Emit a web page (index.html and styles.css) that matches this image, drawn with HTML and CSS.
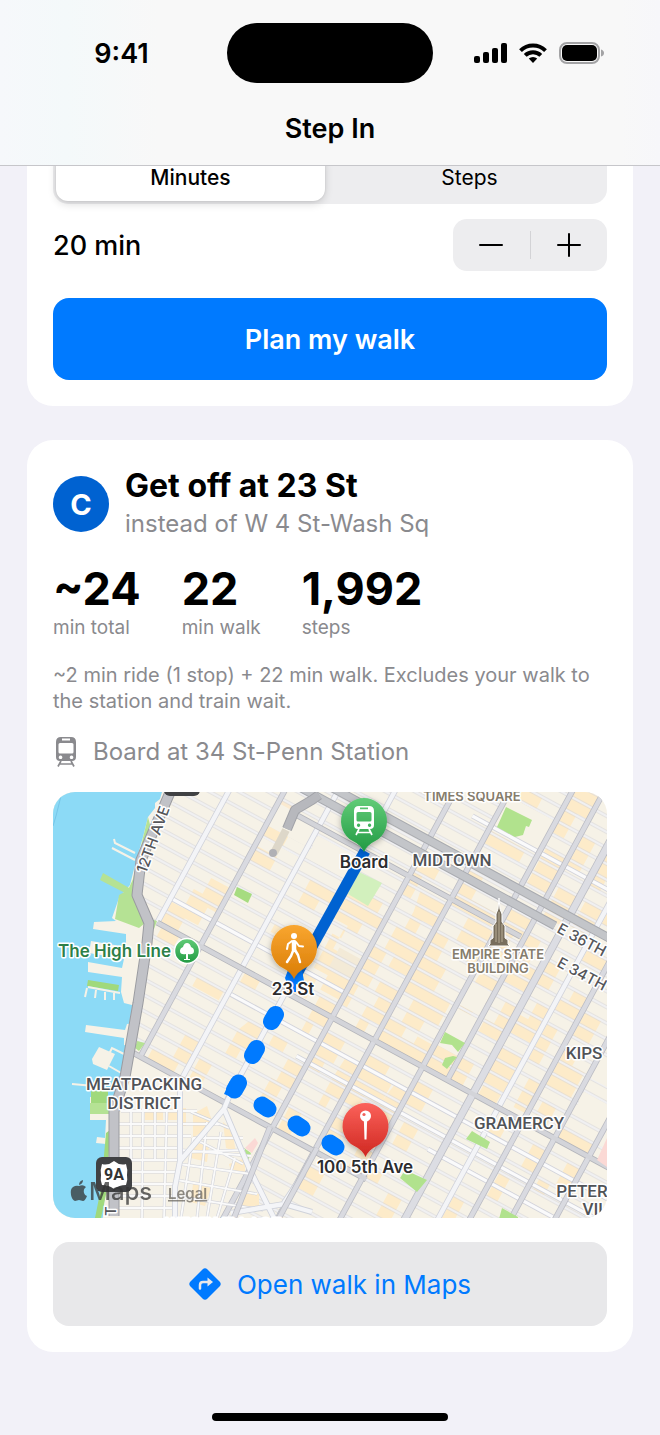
FILE: index.html
```html
<!DOCTYPE html>
<html lang="en">
<head>
  <meta charset="UTF-8">
  <meta name="viewport" content="width=device-width, initial-scale=1.0">
  <title>Step In</title>
  <link rel="stylesheet" href="styles.css">
</head>
<body>
  <header class="top-bar">
    <div class="status-bar">
      <span class="time">9:41</span>
      <span class="island"></span>
      <span class="status-icons">
        <svg width="33" height="20" viewBox="0 0 33 20">
          <rect x="0" y="13" width="6" height="7" rx="2"/>
          <rect x="9" y="9" width="6" height="11" rx="2"/>
          <rect x="18" y="5" width="6" height="15" rx="2"/>
          <rect x="27" y="0" width="6" height="20" rx="2"/>
        </svg>
        <svg width="28" height="20" viewBox="0 0 28 20" fill="none" stroke="#000" stroke-width="4">
          <path d="M1.5 7.6a18 18 0 0 1 25 0"/>
          <path d="M6.2 12.4a11.2 11.2 0 0 1 15.6 0"/>
          <path d="M14 20l-4.2-4.4a6.2 6.2 0 0 1 8.4 0z" fill="#000" stroke="none"/>
        </svg>
        <svg width="45" height="22" viewBox="0 0 45 22">
          <rect x="1" y="1" width="39" height="20" rx="7" fill="none" stroke="#a3a3a5" stroke-width="2"/>
          <rect x="3" y="3" width="35" height="16" rx="5"/>
          <path d="M42 7.5q3 1 3 3.5t-3 3.5z" fill="#a3a3a5"/>
        </svg>
      </span>
    </div>
    <h1>Step In</h1>
  </header>

  <main>
    <section class="card planner">
      <form id="planForm">
        <div class="segmented">
          <input type="radio" name="unit" id="unitMinutes" checked>
          <label for="unitMinutes">Minutes</label>
          <input type="radio" name="unit" id="unitSteps">
          <label for="unitSteps">Steps</label>
        </div>
        <div class="amount-row">
          <output id="amount">20 min</output>
          <div class="stepper">
            <button type="button" aria-label="Decrease">
              <svg width="24" height="24" viewBox="0 0 24 24"><path d="M1 12h22"/></svg>
            </button>
            <button type="button" aria-label="Increase">
              <svg width="24" height="24" viewBox="0 0 24 24"><path d="M1 12h22M12 1v22"/></svg>
            </button>
          </div>
        </div>
        <button type="submit" class="plan-btn">Plan my walk</button>
      </form>
    </section>

    <section class="card result">
      <div class="stop">
        <span class="line-badge">C</span>
        <div>
          <h2>Get off at 23 St</h2>
          <p class="instead">instead of W 4 St-Wash Sq</p>
        </div>
      </div>

      <dl class="stats">
        <div><dd>~24</dd><dt>min total</dt></div>
        <div><dd>22</dd><dt>min walk</dt></div>
        <div><dd>1,992</dd><dt>steps</dt></div>
      </dl>

      <p class="note">~2 min ride (1 stop) + 22 min walk. Excludes your walk to the station and train wait.</p>

      <p class="board">
        <svg width="26" height="32" viewBox="0 0 26 32">
          <path fill-rule="evenodd" d="M8 1h10q5 0 5 5v15q0 4-4 4H7q-4 0-4-4V6q0-5 5-5zM9 2.5v2h8v-2zM7 7q-1.500 0-1.500 1.500V16q0 1.500 1.500 1.500h12q1.500 0 1.500-1.500V8.500Q20.500 7 19 7zM7.500 19.500a1.800 1.800 0 1 0 .1 0zM18.500 19.500a1.800 1.800 0 1 0 .1 0z"/>
          <path d="M8 25l-3 5.500M18 25l3 5.500M6.500 28h13" fill="none" stroke="#8a8a8e" stroke-width="1.700"/>
        </svg>
        Board at 34 St-Penn Station
      </p>

      <svg class="map" viewBox="0 0 554 426" role="img" aria-label="Walk from 23 St to 100 5th Ave">
        <defs>
          <pattern id="streets" y="2" width="40" height="14" patternUnits="userSpaceOnUse">
            <path d="M0 7h40" stroke="#d3d4da" stroke-width="2.800"/>
            <path d="M0 7h40" stroke="#fafafa" stroke-width="1.600"/>
          </pattern>
          <linearGradient id="green" x2="0" y2="1"><stop offset="0" stop-color="#62cc78"/><stop offset="1" stop-color="#219a43"/></linearGradient>
          <linearGradient id="orange" x2="0" y2="1"><stop offset="0" stop-color="#f9a62f"/><stop offset="1" stop-color="#d97c06"/></linearGradient>
          <linearGradient id="red" x2="0" y2="1"><stop offset="0" stop-color="#fb625a"/><stop offset="1" stop-color="#cf2721"/></linearGradient>
          <filter id="shadow" x="-30%" y="-30%" width="160%" height="160%"><feDropShadow dx="0" dy="2" stdDeviation="3" flood-opacity=".3"/></filter>
          <path id="pin" d="M0-23a23 23 0 0 1 12 42.600Q3 24 0 31Q-3 24-12 19.600A23 23 0 0 1 0-23z"/>
          <path id="train" fill-rule="evenodd" d="M-5-15h10q5 0 5 5V4q0 4-4 4H-6q-4 0-4-4v-14q0-5 5-5zM-4-13.500v1.700h8v-1.700zM-6-9q-1.500 0-1.500 1.500V-1q0 1.500 1.500 1.500H6Q7.500.500 7.500-1v-6.500Q7.500-9 6-9zM-5.500 2.500a1.700 1.700 0 1 0 .1 0zM5.500 2.500a1.700 1.700 0 1 0 .1 0z"/>
        </defs>

        <rect width="554" height="426" fill="#f6f2e7"/>

        <!-- everything in this group is drawn along the street grid -->
        <g transform="rotate(28.500)">
          <!-- busy blocks -->
          <path fill="#fdebc9" d="M205-75h23v42h-23zM180 0h23v28h-12v20h-15v14h-20V40h14V18h10zM160 65h20v14h-20zM120 205h40v14h-40zM122 177h48v13h-48z
            M215 93h30v11h-30zM255 65h17v14h-17zM232 149h16v28h-16zM210 177h30v12h-30z
            M268-47h30v14h-12v14h-18zM258 9h14v10h-14zM282 107h15v28h-9v12h-12v-26zM256 163h14v27h-14z
            M303-61h40v13h10v16h-18v12h-14v24h18v16h12v26h-22v-16h-16V-9h10v-14h-20z
            M303 37h18v24h-18zM332 51h20v28h-12v14h-8zM310 107h16v12h-16zM334 121h18v28h-10v28h-14v-30h6z
            M355-117h22v14h-12v26h-10zM370-89h30v26h-14v16h14v40h-22v-14h-12v-26h8v-20zM355-19h15v42h-9v26h-6z
            M378 9h22v40h-12v14h-10V37h6V23h-6zM356 79h20v26h-8v16h-12zM384 93h16v42h-10v14h-8v-28zM358 163h14v27h-14z
            M403-229h30v26h-10v10h-20zM403-175h40v14h-40zM436-201h18v24h-12v-10h-6zM403-131h16v26h30v14h-46zM425-89h30v40h-16v-12h-14z
            M403-61h15v28h12v28h20v28h-14v14h-20V9h-13zM403 37h20v12h14v-8h18v22h-52zM403 79h24v12h10v28h-18v14h-16zM440 93h15v40h-9v14h-10v-28z
            M403 149h15v28h-15zM438 163h16v28h-16zM403 205h18v26h-18z
            M458-257h25v26h-12v28h-13zM460-187h22v42h-22zM458-117h25v24h-10v30h-15zM462-47h20v28h-8v30h-14v-16zM458 23h24v40h-24zM458 79h18v28h-18zM466 121h16v28h-16zM458 177h14v14h-14z
            M487-215h14v38h-14zM490-159h21v34h-21zM486-103h14v28h10v26h-24zM498-33h12v40h-22V-7h10zM486 37h14v26h-14z
            M516-215h25v14h-13v28h-12zM520-159h20v30h-20zM516-89h14v28h-14zM526-47h14v40h-24v-20h10zM516 9h24v40h-24zM518 51h20v13h-20z
            M545-187h12v42h-12zM545-117h24v14h-24zM553-75h15v28h-23v-14h8zM545-33h12v42h-12zM555 23h13v34h-13zM544 79h14v14h-14z
            M573-145h20v28h-20zM573-61h18v28h-18zM573-19h14v12h14v30h-28zM578 37h15v24h-15zM590 79h14v28h-14zM574 121h12v28h-12z
            M610-75h18v14h-18zM608 51h36v12h-36zM629 79h14v26h-14zM612 107h12v14h-12zM545 163h12v28h-12zM486 191h15v28h-15z"/>
          <path fill="#fbead0" d="M205-103h20v28h-20z"/>
          <path fill="#f3ead7" d="M326 0h24v24h-24z"/>

          <path d="M110-300H760V420H350V191H110z" fill="url(#streets)"/>
          <!-- super blocks -->
          <g fill="#f6f2e7">
            <path d="M205-98h44v25h-44zM254-88h45v25h-45zM205-60h44v10h-44zM609-30h34v25h-34zM648 10h80v40h-80zM610 10h33v24h-33z"/>
            <path d="M459-33h22v26h-22zM543-145h26v25h-26zM457-3h25v42h-25zM404-214h51v36h-51z"/>
          </g>

          <!-- cross streets -->
          <g fill="none">
            <path d="M253 93H690M340 116H690M154 37H354M500 135H690M380-179H560M203-173H300" stroke="#d3d4db" stroke-width="5"/>
            <path d="M253 93H690M340 116H690M154 37H354M500 135H690M380-179H560M203-173H300" stroke="#fafafb" stroke-width="3.200"/>
          </g>

          <!-- light avenues -->
          <g fill="none">
            <path d="M154-200V65M250-200V191M300-250V191M542-300V78M542 93V230" stroke="#d0d2da" stroke-width="6"/>
            <path d="M154-200V65M250-200V191M300-250V191M542-300V78M542 93V230" stroke="#f3f4f7" stroke-width="4.400"/>
          </g>

          <!-- grey avenues and main crosstown streets -->
          <g fill="none">
            <path d="M203-200V191M353-250V330M401-250V400M456-300V300M484-300V65M570-300V300M606-300V300M645-300V300" stroke="#bcbdc4" stroke-width="6"/>
            <path d="M513-300V300" stroke="#bcbdc4" stroke-width="8"/>
            <path d="M154 65H760M122 191H460M220-96H480" stroke="#b4b5bb" stroke-width="6"/>
            <path d="M203-200V191M353-250V330M401-250V400M456-300V300M484-300V65M570-300V300M606-300V300M645-300V300" stroke="#d9dae0" stroke-width="4.400"/>
            <path d="M513-300V300" stroke="#dcdde3" stroke-width="6.400"/>
            <path d="M154 65H760M122 191H460M220-96H480" stroke="#d3d4d9" stroke-width="4.400"/>
            <path d="M230-137H760M200-122H505" stroke="#a9abb0" stroke-width="9"/>
            <path d="M230-137H760M200-122H505" stroke="#c3c5c9" stroke-width="7"/>
          </g>
        </g>

        <!-- parks and squares -->
        <path fill="#b1e28d" d="M453 15l26 13-3 7-3-1-3 9-8 2-18-10zM392 240l20 11-7 9-6-7-12-2zM400 264l4 1-10 12-5-4 3-7zM419 339l18 11-3 7-21-10zM352 378l22 10-10 12-17-14zM449 416l16 9v2h-19zM191 356l7 5-4 10-4-10z"/>
        <path fill="#a6dc80" d="M184 95l15 7-4 9-14-8z"/>
        <path fill="#d2f0bd" d="M306 80l23 11-14 23-20-12z"/>
        <path fill="#fbd9d5" d="M554 346l-10 22 10 7zM202 346l3 5-6 10-7-5z"/>

        <!-- village streets -->
        <g fill="none">
          <path fill="#fdebc9" d="M92 318h18v10h-18zM113 316h20v18h-9v-6h-11zM140 322l14-8 6 18-20 14zM170 330l9 8 4 22-10-4zM140 350l16 4-2 16-16-4zM140 392l18 4-6 18-14-4zM188 402h18v12h-18zM176 372l16-6v14h-14z"/>
          <g stroke="#d3d4da" stroke-width="3">
            <path d="M68 319h76M66 332h100M66 344h72M66 356h64M66 368h60M66 380h59M66 392h57M66 404h56M66 416h56M90 316l-1 110M114 312l-3 114M78 318v50M102 318v50"/>
            <path d="M128 358l70 6M126 372l72 10M124 388l80 14M122 404l88 14M140 346l-12 80M154 330l-10 96M168 340l-14 86M182 366l-18 60M200 380l-20 46M176 336l-38-16M190 372l-50-26M140 346h50M136 360l56-2"/>
          </g>
          <g stroke="#fafafa" stroke-width="1.800">
            <path d="M68 319h76M66 332h100M66 344h72M66 356h64M66 368h60M66 380h59M66 392h57M66 404h56M66 416h56M90 316l-1 110M114 312l-3 114M78 318v50M102 318v50"/>
            <path d="M128 358l70 6M126 372l72 10M124 388l80 14M122 404l88 14M140 346l-12 80M154 330l-10 96M168 340l-14 86M182 366l-18 60M200 380l-20 46M176 336l-38-16M190 372l-50-26M140 346h50M136 360l56-2"/>
          </g>
          <path d="M181 293l-10 24-44 52-5 26v31M171 317l26 61 24 48M127 290v79M178 421l53-9 28 8M231 411l20-30" stroke="#cfd2da" stroke-width="6"/>
          <path d="M181 293l-10 24-44 52-5 26v31M171 317l26 61 24 48M127 290v79M178 421l53-9 28 8M231 411l20-30" stroke="#f4f5f8" stroke-width="4.400"/>
          <path d="M181 426l36-91M226 426l38-70" stroke="#bcbdc4" stroke-width="6"/>
          <path d="M181 426l36-91M226 426l38-70" stroke="#d9dae0" stroke-width="4.400"/>
        </g>

        <!-- west side, river and piers -->
        <path fill="#f6f2e7" d="M0 0h118L88 68l-4 35 12 28-2 20-10 60-14 76-10 34v105H0z"/>
        <path fill="#8cdaf6" d="M0 0h109l-2 7-5 4v5l-7 9-5 20-8 28-5 20-11 13-7 20 4 3-22 1-1 7 33 5v13l-35-6-2 12 35 6-2 9-34-6v10l34 5-1 15 3 11 12 3-1 17-8 1-2 6-39-5-1 7 39 6v7l8 2-5 31-5 8-9 11H37v23h16l-1 18-8-1-1 6 10 1-2 64-2 15H30v6H0z"/>
        <path fill="#b5e294" d="M95 25l4 15-12 30-4 33 9 28-6 5-24-9 4-24 9-5 5-11zM50 81l28 16-4 5-27-14zM95 126l9 3-3 8-6-3zM84 249l8 2-6 8-4-3z"/>
        <path fill="#a0d97c" d="M38 299h17v12H38zM35 188l31 5-1 6-31-5zM53 341l4-3-3 60-6 28h-6l6-30z"/>
        <path fill="#b5e294" d="M37 311h19v11H37z"/>
        <path fill="#f6f2e7" d="M46 255l16 7-8 16-14-6-1-5z"/>
        <path fill="none" stroke="#f6f2e7" stroke-width="2" d="M56 262l3-6 12 6M56 274l14 8M19 292l22 2M34 196l-2 9M43 198l-1 8M52 200v8M61 201v7M35 195l32 6M61 47l1 4 20 10M59 56l23 12"/>
        <path fill="none" stroke="#9b9ca1" stroke-width="11" stroke-linejoin="round" d="M118-2L88 68l-4 35 12 28-2 20-9 60-13 74-11 34v105"/>
        <path fill="none" stroke="#c1c2c7" stroke-width="9" stroke-linejoin="round" d="M118-2L88 68l-4 35 12 28-2 20-9 60-13 74-11 34v105"/>
        <path fill="none" stroke="#76c5e8" d="M9 0L3 24 0 34"/>

        <!-- tunnel entrance -->
        <path fill="none" stroke="#ddd7c9" stroke-width="8" d="M233 38l-12 23"/>
        <path fill="none" stroke="#a2a3a8" stroke-width="10" stroke-linejoin="round" d="M266 3l-7 5-17 10-8 19"/>
        <path fill="none" stroke="#b7b8bd" stroke-width="8" stroke-linejoin="round" d="M266 3l-7 5-17 10-8 19"/>
        <circle cx="220" cy="61" r="4" fill="#b0b0b5"/>

        <!-- area labels -->
        <g class="halo" text-anchor="middle">
          <text class="area" x="399" y="74">MIDTOWN</text>
          <text class="area" x="91" y="298">MEATPACKING</text>
          <text class="area" x="91" y="317">DISTRICT</text>
          <text class="area" x="466" y="337">GRAMERCY</text>
          <text class="area" x="531" y="267">KIPS</text>
          <text class="area" x="529" y="405">PETER</text>
          <text class="area" x="542" y="423">VIL</text>
          <text class="area" x="170" y="438">WEST VILLAGE</text>
          <text class="sight" x="419" y="9">TIMES SQUARE</text>
          <text class="sight" x="445" y="167">EMPIRE STATE</text>
          <text class="sight" x="445" y="181">BUILDING</text>
        </g>
        <g class="halo road">
          <text transform="translate(93 82) rotate(-70)">12TH AVE</text>
          <text transform="translate(503 140) rotate(28)">E 36TH</text>
          <text transform="translate(503 174) rotate(28)">E 34TH</text>
          <text transform="translate(63 424) rotate(-90)">T</text>
        </g>
        <text class="halo park" x="5" y="165">The High Line</text>
        <circle cx="134" cy="159" r="12.500" fill="url(#green)" stroke="#fff" stroke-width="1.500"/>
        <path fill="#fff" d="M133 167v-5q-6 1-6-3 0-3 3-4 1-4 4-4t4 4q3 1 3 4 0 4-6 3v5h2v1h-6v-1z"/>

        <!-- empire state building -->
        <path fill="#786e5d" stroke="#fff" stroke-width="1" d="M446 106l1 11 2 5v8l3 4v12l3 2v4l2 2h-22l2-2v-4l3-2v-12l3-4v-8l2-5z"/>
        <path stroke="#b9ae98" stroke-width="1" d="M446 120v31M449 132v18M443 132v18"/>

        <!-- route -->
        <path d="M312 59L241 187" stroke="#0062d1" stroke-width="11"/>
        <g stroke="#007aff" stroke-width="17" stroke-linecap="round">
          <path d="M222.500 222.500l-4 7M203.500 256.500l-4 7M185.500 291l-4 7M209 313l6 4M243 332l6 4M277 351l6 4"/>
        </g>
        <path fill="#007aff" d="M177 289l-6 13 10 4zM232 186l3-8h14l2 11-3 5-5-2v8h-4v-8l-4 2z"/>

        <!-- pins -->
        <g transform="translate(311 29)">
          <use href="#pin" fill="url(#green)" filter="url(#shadow)"/>
          <use href="#train" fill="#fff"/>
          <path d="M-5 8l-3 6M5 8l3 6M-7 11.500H7" fill="none" stroke="#fff" stroke-width="1.700"/>
        </g>
        <g transform="translate(241 156)">
          <use href="#pin" fill="url(#orange)" filter="url(#shadow)"/>
          <circle cy="-12" r="3" fill="#fff"/>
          <g fill="none" stroke="#fff" stroke-linecap="round" stroke-linejoin="round">
            <path d="M0-6v8" stroke-width="4.500"/>
            <path d="M-1 3l-2 5-4 6M1 2l3 5 2 7" stroke-width="2.500"/>
            <path d="M-2-7l-4 3-1 5M2-6l3 4 4 .5" stroke-width="2"/>
          </g>
        </g>
        <g transform="translate(312.500 334)">
          <use href="#pin" fill="url(#red)" filter="url(#shadow)"/>
          <circle cy="-10" r="5.500" fill="#fff"/>
          <circle cx="-1.500" cy="-11.500" r="1.600" fill="#f0625c"/>
          <path d="M-1.600-5h3.200L1 13.500h-2z" fill="#fff"/>
        </g>
        <g class="halo place" text-anchor="middle">
          <text x="311" y="76">Board</text>
          <text x="240" y="203">23 St</text>
          <text x="312" y="381">100 5th Ave</text>
        </g>

        <!-- route shields -->
        <rect x="111" y="-24" width="36" height="28" rx="6" fill="#404143"/>
        <rect x="43" y="365" width="36" height="35" rx="6" fill="#404143"/>
        <path fill="#fff" d="M61 369q6 5 12 3 2 6 1 11 1 5-1 10-7 0-12 4-5-4-12-4-2-5-1-10-1-5 1-11 6 2 12-3z"/>
        <text class="shield" x="61" y="388" text-anchor="middle">9A</text>

        <g class="attribution">
          <path d="M26 394q4-2 7 1-3 2-2 6 1 3 3 3-2 5-4 5l-4-1-4 1q-3-1-4-6-1-6 2-8 3-2 6-1zM26 393q0-4 4-5 0 4-4 5z"/>
          <text class="brand" x="36" y="408">Maps</text>
          <a href="#legal"><text class="legal" x="115" y="407">Legal</text></a>
        </g>
      </svg>

      <a class="maps-btn" href="#maps">
        <svg width="32" height="32" viewBox="0 0 32 32">
          <path fill="#007aff" d="M18.500 1.500l12 12q2.500 2.500 0 5l-12 12q-2.500 2.500-5 0l-12-12q-2.500-2.500 0-5l12-12q2.500-2.500 5 0z"/>
          <path fill="none" stroke="#e8e8ea" stroke-width="2.500" stroke-linecap="round" d="M11 20.500V17q0-3 3-3h5"/>
          <path fill="#e8e8ea" d="M18.500 9.500l5.500 4.500-5.500 4.500z"/>
        </svg>
        Open walk in Maps
      </a>
    </section>
  </main>

  <div class="home-indicator"></div>
</body>
</html>
```

FILE: styles.css
```css
* {
  box-sizing: border-box;
}

body {
  margin: 0;
  font-family: Inter, "Liberation Sans", sans-serif;
  font-size: 27px;
  color: #000;
  background: #f2f1f8;
}

h1, h2, p, dl, dd {
  margin: 0;
}

svg {
  display: block;
}

button {
  font: inherit;
  border: none;
  cursor: pointer;
}

.top-bar {
  position: sticky;
  top: 0;
  z-index: 2;
  height: 166px;
  padding-top: 23px;
  background: linear-gradient(90deg, #f6f8fb, #f4f9fa 10%, #f8f8f8 24%, #f8f8f8 94%, #f7f7fa);
  border-bottom: 1px solid #c6c6ca;
}

.status-bar {
  display: grid;
  grid-template-columns: 1fr 206px 1fr;
  align-items: center;
  justify-items: center;
  padding: 0 16px;
}

.time {
  font-weight: 600;
}

.island {
  width: 206px;
  height: 60px;
  border-radius: 30px;
  background: #000;
}

.status-icons {
  display: flex;
  align-items: center;
  gap: 12px;
}

.top-bar h1 {
  margin-top: 30px;
  font-size: 27px;
  font-weight: 600;
  line-height: 32px;
  text-align: center;
}

main {
  padding: 0 27px;
}

.card {
  padding: 26px;
  background: #fff;
  border-radius: 26px;
}

/* scrolled partly under the top bar */
.planner {
  margin-top: -42px;
}

.segmented {
  display: grid;
  grid-template-columns: 1fr 1fr;
  gap: 10px;
  height: 54px;
  padding: 3px;
  border-radius: 15px;
  background: #ededef;
}

.segmented input {
  position: absolute;
  opacity: 0;
}

.segmented label {
  display: flex;
  align-items: center;
  justify-content: center;
  font-size: 21px;
  border-radius: 12px;
}

.segmented input:checked + label {
  background: #fff;
  font-weight: 500;
  box-shadow: 0 3px 8px rgba(0, 0, 0, 0.14), 0 0 3px rgba(0, 0, 0, 0.1);
}

.amount-row {
  display: flex;
  align-items: center;
  justify-content: space-between;
  margin: 15px 0 27px;
  font-weight: 500;
}

.stepper {
  display: flex;
  width: 154px;
  height: 52px;
  padding: 12px 0;
  border-radius: 14px;
  background: #ededef;
}

.stepper button {
  display: flex;
  flex: 1;
  align-items: center;
  justify-content: center;
  padding: 0;
  background: none;
}

.stepper button + button {
  border-left: 1px solid #d3d3d6;
}

.stepper path {
  fill: none;
  stroke: #000;
  stroke-width: 2px;
  stroke-linecap: round;
}

.plan-btn {
  display: block;
  width: 100%;
  height: 82px;
  border-radius: 16px;
  background: #007aff;
  color: #fff;
  font-weight: 600;
}

.result {
  margin-top: 34px;
}

.stop {
  display: flex;
  align-items: center;
  gap: 16px;
}

.line-badge {
  display: flex;
  align-items: center;
  justify-content: center;
  width: 56px;
  height: 56px;
  border-radius: 50%;
  background: #0062d1;
  color: #fff;
  font-size: 29px;
  font-weight: 700;
}

.stop h2 {
  font-size: 32px;
  line-height: 40px;
}

.instead {
  color: #8a8a8e;
  font-size: 24px;
  line-height: 36px;
}

.stats {
  display: flex;
  gap: 41px;
  margin-top: 20px;
}

.stats div {
  display: flex;
  flex-direction: column;
}

.stats dd {
  font-size: 45px;
  font-weight: 700;
  line-height: 54px;
}

.stats dt {
  color: #8a8a8e;
  font-size: 19px;
  line-height: 24px;
}

.note {
  margin-top: 22px;
  color: #8a8a8e;
  font-size: 20px;
  line-height: 26px;
}

.board {
  display: flex;
  align-items: center;
  gap: 14px;
  margin-top: 22px;
  color: #8a8a8e;
  font-size: 24px;
  line-height: 32px;
}

.board svg {
  fill: #8a8a8e;
}

.map {
  width: 100%;
  margin-top: 24px;
  border-radius: 22px;
}

.halo {
  paint-order: stroke;
  stroke: #fff;
  stroke-width: 3px;
  stroke-linejoin: round;
}

.area {
  font-family: "Liberation Sans Narrow", Roboto, sans-serif;
  font-size: 17px;
  font-weight: 500;
  fill: #505357;
}

.sight {
  font-size: 13px;
  font-weight: 600;
  fill: #857c6c;
}

.road {
  font-size: 15px;
  font-weight: 500;
  fill: #55565a;
}

.park {
  font-size: 17px;
  font-weight: 600;
  fill: #2d7f48;
}

.place {
  font-size: 17px;
  font-weight: 600;
  fill: #2c2c2e;
}

.shield {
  font-family: Roboto, sans-serif;
  font-size: 16px;
  font-weight: 700;
  fill: #333;
}

.attribution {
  fill: #333;
  opacity: 0.75;
}

.brand {
  font-size: 24px;
  font-weight: 500;
}

.legal {
  font-size: 15px;
  font-weight: 600;
  fill: #6a665f;
  text-decoration: underline;
}

.maps-btn {
  display: flex;
  align-items: center;
  justify-content: center;
  gap: 16px;
  height: 84px;
  margin-top: 24px;
  border-radius: 16px;
  background: #e8e8ea;
  color: #007aff;
  font-size: 26px;
  text-decoration: none;
}

.home-indicator {
  width: 236px;
  height: 8px;
  margin: 61px auto 14px;
  border-radius: 4px;
  background: #000;
}
```
